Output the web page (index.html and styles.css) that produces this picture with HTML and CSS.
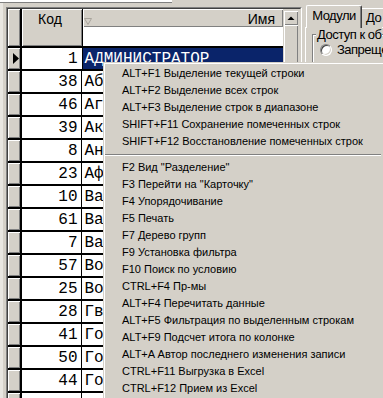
FILE: index.html
```html
<!DOCTYPE html>
<html lang="ru">
<head>
    <meta charset="UTF-8" />
    <title>Пользователи</title>
    <link rel="stylesheet" href="styles.css">
</head>
<body>
    <div class="topbar"></div>
    <div class="main">
        <div class="grid-frame">
            <div class="grid-inner">
                <div class="table">
                    <div class="head">
                        <div class="ind raised"></div>
                        <div class="code raised head-code">Код</div>
                        <div class="name-head">
                            <div class="name-title raised">
                                <svg class="sort" width="8" height="7" viewBox="0 0 8 7"><polygon points="0.5,0.5 7.5,0.5 4,6.5" fill="none" stroke="#a8a49c" /></svg>
                                <span>Имя</span>
                            </div>
                            <div class="filter"></div>
                        </div>
                    </div>
                    <div class="row sel">
                        <div class="ind raised"><svg width="12" height="21" viewBox="0 0 12 21"><polygon points="5,5 11,10.5 5,16" fill="#000" /></svg></div>
                        <div class="code">1</div>
                        <div class="name">АДМИНИСТРАТОР</div>
                    </div>
                    <div class="row"><div class="ind raised"></div><div class="code">38</div><div class="name">Аб</div></div>
                    <div class="row"><div class="ind raised"></div><div class="code">46</div><div class="name">Аг</div></div>
                    <div class="row"><div class="ind raised"></div><div class="code">39</div><div class="name">Ак</div></div>
                    <div class="row"><div class="ind raised"></div><div class="code">8</div><div class="name">Ан</div></div>
                    <div class="row"><div class="ind raised"></div><div class="code">23</div><div class="name">Аф</div></div>
                    <div class="row"><div class="ind raised"></div><div class="code">10</div><div class="name">Ва</div></div>
                    <div class="row"><div class="ind raised"></div><div class="code">61</div><div class="name">Ва</div></div>
                    <div class="row"><div class="ind raised"></div><div class="code">7</div><div class="name">Ва</div></div>
                    <div class="row"><div class="ind raised"></div><div class="code">57</div><div class="name">Во</div></div>
                    <div class="row"><div class="ind raised"></div><div class="code">25</div><div class="name">Во</div></div>
                    <div class="row"><div class="ind raised"></div><div class="code">28</div><div class="name">Гв</div></div>
                    <div class="row"><div class="ind raised"></div><div class="code">41</div><div class="name">Го</div></div>
                    <div class="row"><div class="ind raised"></div><div class="code">50</div><div class="name">Го</div></div>
                    <div class="row"><div class="ind raised"></div><div class="code">44</div><div class="name">Го</div></div>
                    <div class="row"><div class="ind raised"></div><div class="code"></div><div class="name"></div></div>
                </div>
                <div class="vscroll">
                    <div class="sbtn raised"><svg width="14" height="14" viewBox="0 0 14 14"><polygon points="3.5,9 10.5,9 7,5.5" fill="#000" /></svg></div>
                    <div class="thumb raised"></div>
                </div>
            </div>
        </div>
        <div class="tabs">
            <div class="tab-row">
                <div class="tab active">Модули</div>
                <div class="tab">До</div>
            </div>
            <div class="page">
                <div class="group">
                    <div class="group-title">Доступ к об</div>
                    <div class="radio-row">
                        <span class="radio"></span>
                        <span>Запреще</span>
                    </div>
                </div>
            </div>
        </div>
    </div>

    <div class="menu">
        <div class="item">ALT+F1 Выделение текущей строки</div>
        <div class="item">ALT+F2 Выделение всех строк</div>
        <div class="item">ALT+F3 Выделение строк в диапазоне</div>
        <div class="item">SHIFT+F11 Сохранение помеченных строк</div>
        <div class="item">SHIFT+F12 Восстановление помеченных строк</div>
        <div class="sep"></div>
        <div class="item">F2 Вид "Разделение"</div>
        <div class="item">F3 Перейти на "Карточку"</div>
        <div class="item">F4 Упорядочивание</div>
        <div class="item">F5 Печать</div>
        <div class="item">F7 Дерево групп</div>
        <div class="item">F9 Установка фильтра</div>
        <div class="item">F10 Поиск по условию</div>
        <div class="item">CTRL+F4 Пр-мы</div>
        <div class="item">ALT+F4 Перечитать данные</div>
        <div class="item">ALT+F5 Фильтрация по выделенным строкам</div>
        <div class="item">ALT+F9 Подсчет итога по колонке</div>
        <div class="item">ALT+A Автор последнего изменения записи</div>
        <div class="item">CTRL+F11 Выгрузка в Excel</div>
        <div class="item">CTRL+F12 Прием из Excel</div>
    </div>
</body>
</html>
```

FILE: styles.css
```css
body {
    margin: 0;
    width: 383px;
    height: 398px;
    overflow: hidden;
    background-color: #d4d0c8;
    font-family: "Liberation Sans", Arial, sans-serif;
    color: #000;
}
.topbar {
    width: 172px;
    height: 2px;
    background-color: #fff;
    border-bottom: 1px solid #808080;
}
.main {
    display: flex;
    align-items: flex-start;
    border-left: 3px solid #e8e6e1;
}
.raised {
    background-color: #d4d0c8;
    box-shadow: inset 1px 1px #fff, inset -1px -1px #808080;
}

/* grid */
.grid-frame {
    flex-shrink: 0;
    margin: 4px 0 0 3px;
    border: 1px solid;
    border-color: #808080 #fff #fff #808080;
}
.grid-inner {
    display: flex;
    height: 400px;
    overflow: hidden;
    border: 1px solid;
    border-color: #404040 #d4d0c8 #d4d0c8 #404040;
}
.table {
    width: 275px;
}
.head {
    display: flex;
    height: 37px;
    border-bottom: 2px solid #000;
}
.row {
    display: flex;
    height: 21px;
    overflow: hidden;
    border-bottom: 2px solid #000;
    font-family: "Liberation Mono", "Courier New", monospace;
    font-size: 16px;
    line-height: 23px;
}
.ind {
    width: 12px;
    border-right: 2px solid #000;
}
.ind svg {
    display: block;
}
.code {
    box-sizing: border-box;
    width: 61px;
    padding-right: 4px;
    border-right: 1px solid #000;
    background-color: #fff;
    text-align: right;
}
.name {
    width: 200px;
    padding-left: 2px;
    background-color: #fff;
    white-space: nowrap;
    overflow: hidden;
}
.sel .name {
    background-color: #0a246a;
    color: #fff;
}
.head-code {
    padding-top: 2px;
    font-size: 14px;
    line-height: 16px;
    text-align: center;
    background-color: #d4d0c8;
}
.name-head {
    width: 200px;
    display: flex;
    flex-direction: column;
}
.name-title {
    height: 18px;
    display: flex;
    justify-content: space-between;
    align-items: flex-end;
    padding: 0 8px 0 1px;
    font-size: 14px;
    line-height: 16px;
}
.sort {
    margin-bottom: 2px;
}
.filter {
    height: 19px;
    background-color: #fff;
}
.vscroll {
    width: 17px;
    padding: 2px 0 0 1px;
    box-sizing: border-box;
}
.sbtn {
    width: 14px;
    height: 14px;
}
.sbtn svg {
    display: block;
}
.thumb {
    width: 14px;
    height: 420px;
}

/* tabs */
.tabs {
    flex-shrink: 0;
    width: 110px;
    margin: 1px 0 0 3px;
    font-size: 13px;
    letter-spacing: -0.5px;
}
.tab-row {
    display: flex;
    align-items: flex-end;
    height: 23px;
}
.tab {
    height: 18px;
    padding: 0 4px;
    line-height: 18px;
    border-top: 1px solid #fff;
    white-space: nowrap;
}
.tab.active {
    height: 22px;
    width: 46px;
    margin: 0 0 -1px 1px;
    line-height: 20px;
    text-align: center;
    background-color: #d4d0c8;
    border-left: 1px solid #fff;
    border-right: 1px solid #404040;
    box-shadow: inset -1px 0 #808080;
    border-radius: 2px 2px 0 0;
    position: relative;
}
.page {
    height: 380px;
    border-top: 1px solid #fff;
    border-left: 1px solid #fff;
}
.group {
    height: 200px;
    margin: 6px 0 0 6px;
    padding-left: 7px;
    border: 1px solid #808080;
    box-shadow: inset 1px 1px #fff;
}
.group-title {
    width: max-content;
    margin: -8px 0 0 -4px;
    padding: 0 1px;
    line-height: 15px;
    background-color: #d4d0c8;
    white-space: nowrap;
}
.radio-row {
    display: flex;
    align-items: center;
    gap: 5px;
    margin-top: 1px;
    line-height: 14px;
    white-space: nowrap;
}
.radio {
    box-sizing: border-box;
    width: 12px;
    height: 12px;
    border-radius: 50%;
    background-color: #fff;
    border: 1px solid;
    border-color: #808080 #fff #fff #808080;
    box-shadow: inset 1px 1px #404040, inset -1px -1px #d4d0c8;
}

/* context menu */
.menu {
    position: absolute;
    left: 103px;
    top: 62px;
    box-sizing: border-box;
    width: 283px;
    height: 345px;
    padding: 2px 1px;
    background-color: #d4d0c8;
    border: 1px solid;
    border-color: #d4d0c8 #404040 #404040 #d4d0c8;
    box-shadow: inset 1px 1px #fff, inset -1px -1px #808080;
    font-size: 11px;
}
.item {
    height: 17px;
    line-height: 17px;
    padding-left: 17px;
    white-space: nowrap;
}
.sep {
    margin: 4px 3px 3px 0;
    border-top: 1px solid #808080;
    border-bottom: 1px solid #fff;
}
```
